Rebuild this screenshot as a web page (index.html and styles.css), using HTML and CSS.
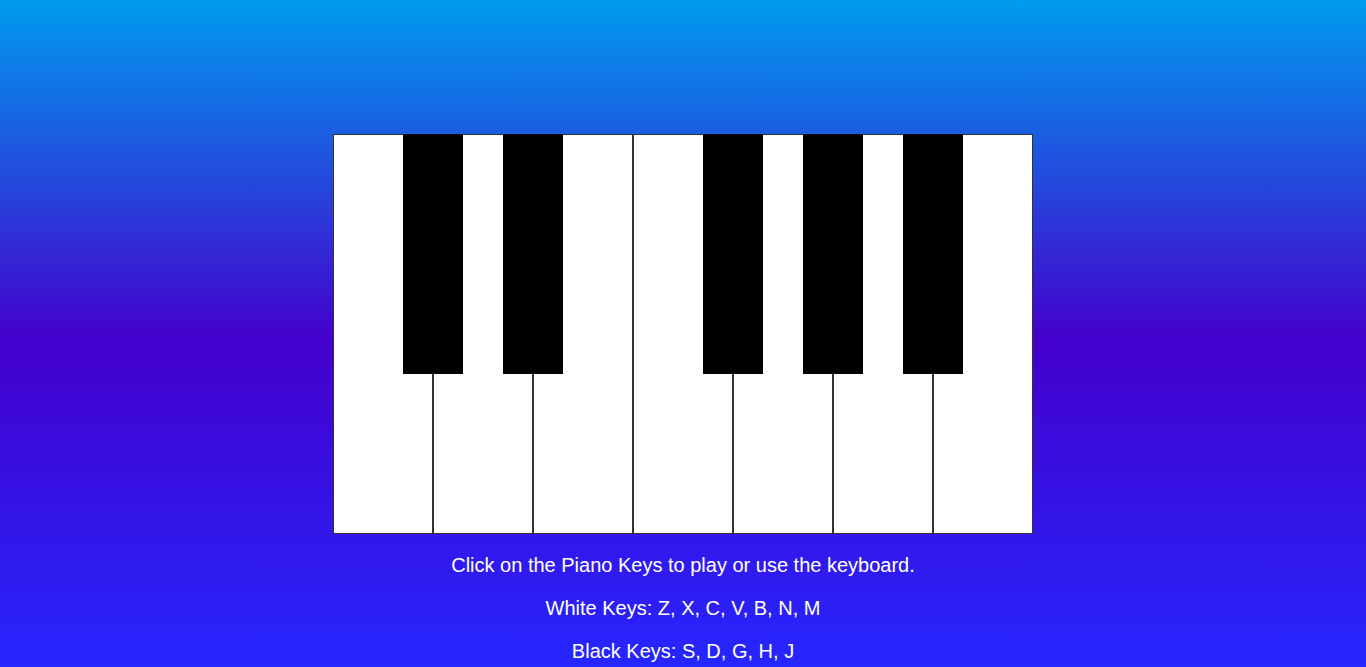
FILE: index.html
```html
<!DOCTYPE html>
<html>
<head>
<meta charset="utf-8">
<title>Piano</title>
<link rel="stylesheet" href="styles.css">
</head>
<body>
<main class="page">
  <div class="piano">
    <div class="white-keys">
      <div class="white"></div>
      <div class="white"></div>
      <div class="white"></div>
      <div class="white"></div>
      <div class="white"></div>
      <div class="white"></div>
      <div class="white"></div>
    </div>
    <div class="black k1"></div>
    <div class="black k2"></div>
    <div class="black k3"></div>
    <div class="black k4"></div>
    <div class="black k5"></div>
  </div>
  <p class="info">Click on the Piano Keys to play or use the keyboard.</p>
  <p class="info">White Keys: Z, X, C, V, B, N, M</p>
  <p class="info">Black Keys: S, D, G, H, J</p>
</main>
</body>
</html>
```
FILE: styles.css
```css
html, body {
  margin: 0;
  padding: 0;
}
body {
  min-height: 667px;
  background: linear-gradient(to bottom, #009bef 0px, #4400cc 340px, #2626ff 667px);
  background-repeat: no-repeat;
  background-color: #2626ff;
  font-family: "Liberation Sans", Arial, sans-serif;
  color: #ffffff;
  overflow: hidden;
}
.page {
  display: flex;
  flex-direction: column;
  align-items: center;
  padding-top: 134px;
}
.piano {
  position: relative;
  width: 700px;
  height: 400px;
}
.white-keys {
  display: flex;
  height: 100%;
}
.white {
  box-sizing: border-box;
  width: 100px;
  height: 400px;
  background: #ffffff;
  border: 1px solid #333333;
}
.black {
  position: absolute;
  top: 0;
  width: 60px;
  height: 240px;
  background: #000000;
}
.k1 { left: 70px; }
.k2 { left: 170px; }
.k3 { left: 370px; }
.k4 { left: 470px; }
.k5 { left: 570px; }
.info {
  font-size: 20px;
  line-height: 23px;
  margin: 20px 0 0 0;
  text-align: center;
}
```
